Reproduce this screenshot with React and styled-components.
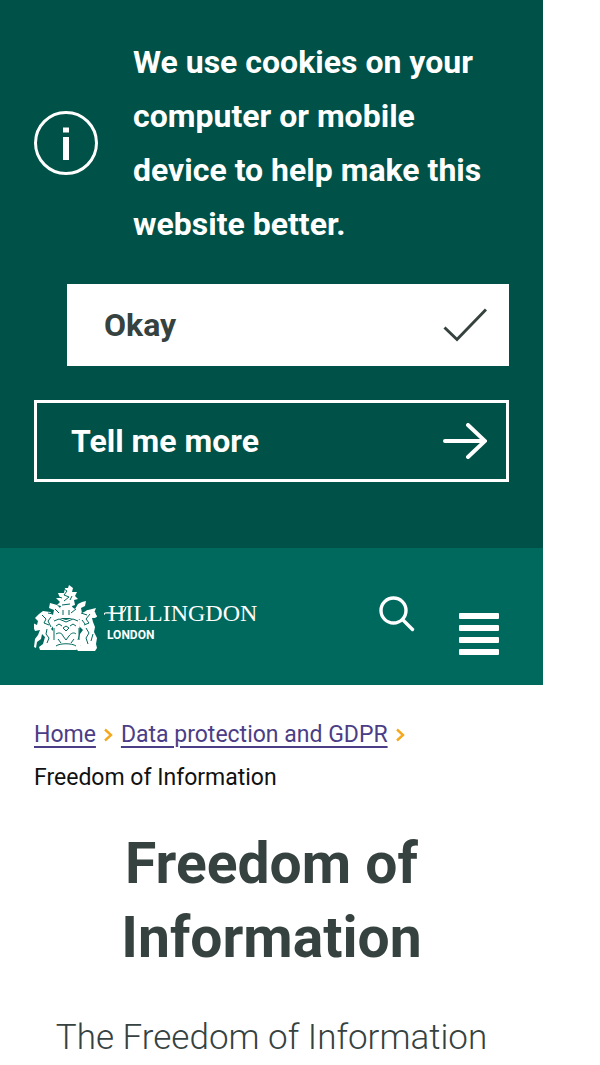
import styled, { createGlobalStyle } from "styled-components"

const GlobalStyle = createGlobalStyle`
    * {
        box-sizing: border-box;
    }
    body {
        margin: 0;
        background: #ffffff;
        color: #36423f;
        font-family: Roboto, "Liberation Sans", sans-serif;
    }
`

const Page = styled.div`
    width: 90.5%;
`

const CookieBanner = styled.section`
    padding: 35px 34px 66px;
    background: #005147;
    color: #ffffff;
`

const Message = styled.div`
    display: flex;
    align-items: center;
    gap: 35px;
    margin-bottom: 33px;
    padding-right: 20px;
    svg {
        flex: none;
    }
`

const MessageText = styled.p`
    margin: 0;
    font-size: 32px;
    font-weight: 700;
    line-height: 54px;
`

const Actions = styled.div`
    display: flex;
    flex-direction: column;
    gap: 34px;
`

const ActionButton = styled.button`
    display: flex;
    align-items: center;
    justify-content: space-between;
    height: 82px;
    margin-left: ${(props) => (props.$filled ? "33px" : "0")};
    padding: 0 19px 0 34px;
    border: 3px solid #ffffff;
    border-radius: 0;
    background: ${(props) => (props.$filled ? "#ffffff" : "transparent")};
    color: ${(props) => (props.$filled ? "#36423f" : "#ffffff")};
    font-family: inherit;
    font-size: 32px;
    font-weight: 700;
    cursor: pointer;
`

const Header = styled.header`
    display: flex;
    justify-content: space-between;
    padding: 36px 44px 30px 34px;
    background: #00695e;
`

const Logo = styled.a`
    display: flex;
    gap: 6px;
    color: #ffffff;
    text-decoration: none;
`

const LogoWords = styled.span`
    display: flex;
    flex-direction: column;
    padding-top: 14px;
`

const LogoName = styled.span`
    position: relative;
    padding-left: 4px;
    font-family: "Liberation Serif", serif;
    font-size: 24px;
    line-height: 30px;
    svg {
        position: absolute;
        left: 0;
        top: 0;
    }
`

const LogoPlace = styled.span`
    padding-left: 3px;
    font-size: 12px;
    font-weight: 700;
    line-height: 14px;
`

const Tools = styled.div`
    display: flex;
    align-items: flex-start;
    gap: 44px;
    padding-top: 12px;
`

const IconButton = styled.button`
    display: flex;
    padding: ${(props) => (props.$low ? "17px 0 0" : "0")};
    border: 0;
    background: none;
    color: #ffffff;
    cursor: pointer;
`

const Breadcrumb = styled.nav`
    padding: 28px 34px 0;
    color: #111111;
    font-size: 23px;
    line-height: 43px;
    ol {
        display: flex;
        flex-wrap: wrap;
        margin: 0;
        padding: 0;
        list-style: none;
    }
    a {
        color: #4b3d86;
        text-underline-offset: 4px;
        text-decoration-thickness: 2px;
    }
    svg {
        margin: 0 8px;
    }
`

const Content = styled.main`
    padding: 28px 34px 0;
    text-align: center;
`

const Title = styled.h1`
    margin: 0 0 38px;
    font-size: 57px;
    font-weight: 700;
    line-height: 74px;
`

const Intro = styled.p`
    margin: 0;
    font-size: 35px;
    font-weight: 300;
    line-height: 50px;
`

const InfoIcon = () => (
    <svg width="64" height="64" viewBox="0 0 64 64" fill="none" aria-hidden="true">
        <circle cx="32" cy="32" r="30.5" stroke="#fff" strokeWidth="3" />
        <path d="M29 16.5h6v5h-6zM29 26h6v23h-6z" fill="#fff" />
    </svg>
)

const CheckIcon = () => (
    <svg width="44" height="34" viewBox="0 0 44 34" fill="none" stroke="currentColor" strokeWidth="3" aria-hidden="true">
        <path d="M1.5 19.5 14 31.5 43 1.5" />
    </svg>
)

const ArrowIcon = () => (
    <svg width="44" height="36" viewBox="0 0 44 36" fill="none" stroke="currentColor" strokeWidth="4" strokeLinecap="round" aria-hidden="true">
        <path d="M2 18h39M25 2l17 16-17 16" />
    </svg>
)

const SearchIcon = () => (
    <svg width="36" height="36" viewBox="0 0 36 36" fill="none" stroke="currentColor" strokeWidth="3.4" aria-hidden="true">
        <circle cx="14.5" cy="14.5" r="12.5" />
        <path d="M23.5 23.5l10 10" strokeLinecap="round" />
    </svg>
)

const MenuIcon = () => (
    <svg width="40" height="42" viewBox="0 0 40 42" fill="currentColor" aria-hidden="true">
        <rect y="0" width="40" height="6" rx="1" />
        <rect y="12" width="40" height="6" rx="1" />
        <rect y="24" width="40" height="6" rx="1" />
        <rect y="36" width="40" height="6" rx="1" />
    </svg>
)

const Chevron = () => (
    <svg width="9" height="14" viewBox="0 0 9 14" fill="none" stroke="#f5a81c" strokeWidth="2.4" aria-hidden="true">
        <path d="M1 1.5 7 7l-6 5.5" />
    </svg>
)

const Crest = () => (
    <svg width="64" height="68" viewBox="0 0 64 68" fill="#fff" aria-hidden="true">
        {/* beast on the helmet */}
        <path d="M35 1l4 3-1 4 5 0-2 4 3 3-4 1 1 5-3 1 1 4H26l1-4-4-1 3-3-4-4 4 0-2-5 6 0 1-5 3 0z" />
        {/* mantling and helmet */}
        <path d="M26 23h12l3 2 3-5 4-2 4-1-1 5-4 2 1 5 6-3 8-2-2 5 3 3-2 2-6-1-2 5-7-3-4 2-4-3H27l-5 3-4-2-5 4-4-2 2-4-1-4 6-1 3 3 1-5-5-2 1-5 7 2 4 4z" />
        {/* shield */}
        <path d="M19 36l6-2 7 2 7-2 7 2-1 15c-1 7-7 11-13 14-6-3-12-7-13-14z" />
        {/* supporters */}
        <path d="M9 27l7 1 3 6 1 7-3 4 4 4 1 9-2 3 4 3-2 2H6l-1-3 4-3 2-7-3-3-1 5-4 3-1 6-2-1 1-8 3-4 2-5-5 1-2-5 0-3 4 2 1-4-3-3 4-4z" />
        <path d="M53 26l8 2 2 5-5 1 1 4 2 5-1 5 3 6-1 6 1 4-2 3H44l-2-3 5-2-3-4 2-8 3-4-4-4 1-7 4-5z" />
        {/* compartment */}
        <path d="M18 55l8 2 6 5 6-5 8-2 1 8-5 3H23l-6-3z" />
        <g fill="none" stroke="#00695e" strokeWidth="1">
            <path d="M30 5l3 2-3 4 5 2-5 4M25 13l3 1M38 12l-2 4M28 21l8-1" />
            <path d="M21 25l4 4M42 25l-5 4M29 26v5M35 26v5M14 29l5 1M47 29l6 2" />
            <path d="M20 37l5-2 7 3 7-3 5 2M22 42l3-2 3 2M36 42l3-2 3 2M29 44l3-2 3 2-3 3z" />
            <path d="M22 50c3-2 6-1 7 2l3 4 3-4c2-3 5-4 7-2M24 55l3 4M40 55l-3 4" />
            <path d="M8 31l4 4-2 4 5 2M13 45l-1 5 3 4-2 5M17 33l-3 4 3 6M20 44v12" />
            <path d="M56 30l-4 5 3 4-5 2M52 44l3 5-3 5 2 6M48 36l3 4M59 50l-2 7M45 44v12" />
            <path d="M22 62c4-3 16-3 20 0" />
        </g>
    </svg>
)

const App = () => {
    return (
        <Page>
            <GlobalStyle />
            <CookieBanner aria-label="Cookies">
                <Message>
                    <InfoIcon />
                    <MessageText>We use cookies on your computer or mobile device to help make this website better.</MessageText>
                </Message>
                <Actions>
                    <ActionButton type="button" $filled>
                        Okay
                        <CheckIcon />
                    </ActionButton>
                    <ActionButton type="button">
                        Tell me more
                        <ArrowIcon />
                    </ActionButton>
                </Actions>
            </CookieBanner>
            <Header>
                <Logo href="#">
                    <Crest />
                    <LogoWords>
                        <LogoName>
                            HILLINGDON
                            <svg width="28" height="30" viewBox="0 0 28 30" fill="none" stroke="#fff" strokeWidth="1.2" aria-hidden="true">
                                <path d="M0 17c0-3 3-2 7-2h9c3 0 5-2 6-6" />
                            </svg>
                        </LogoName>
                        <LogoPlace>LONDON</LogoPlace>
                    </LogoWords>
                </Logo>
                <Tools>
                    <IconButton type="button" aria-label="Search">
                        <SearchIcon />
                    </IconButton>
                    <IconButton type="button" aria-label="Menu" $low>
                        <MenuIcon />
                    </IconButton>
                </Tools>
            </Header>
            <Breadcrumb aria-label="Breadcrumb">
                <ol>
                    <li><a href="#">Home</a><Chevron /></li>
                    <li><a href="#">Data protection and GDPR</a><Chevron /></li>
                    <li>Freedom of Information</li>
                </ol>
            </Breadcrumb>
            <Content>
                <Title>Freedom of Information</Title>
                <Intro>The Freedom of Information</Intro>
            </Content>
        </Page>
    )
}

export default App
